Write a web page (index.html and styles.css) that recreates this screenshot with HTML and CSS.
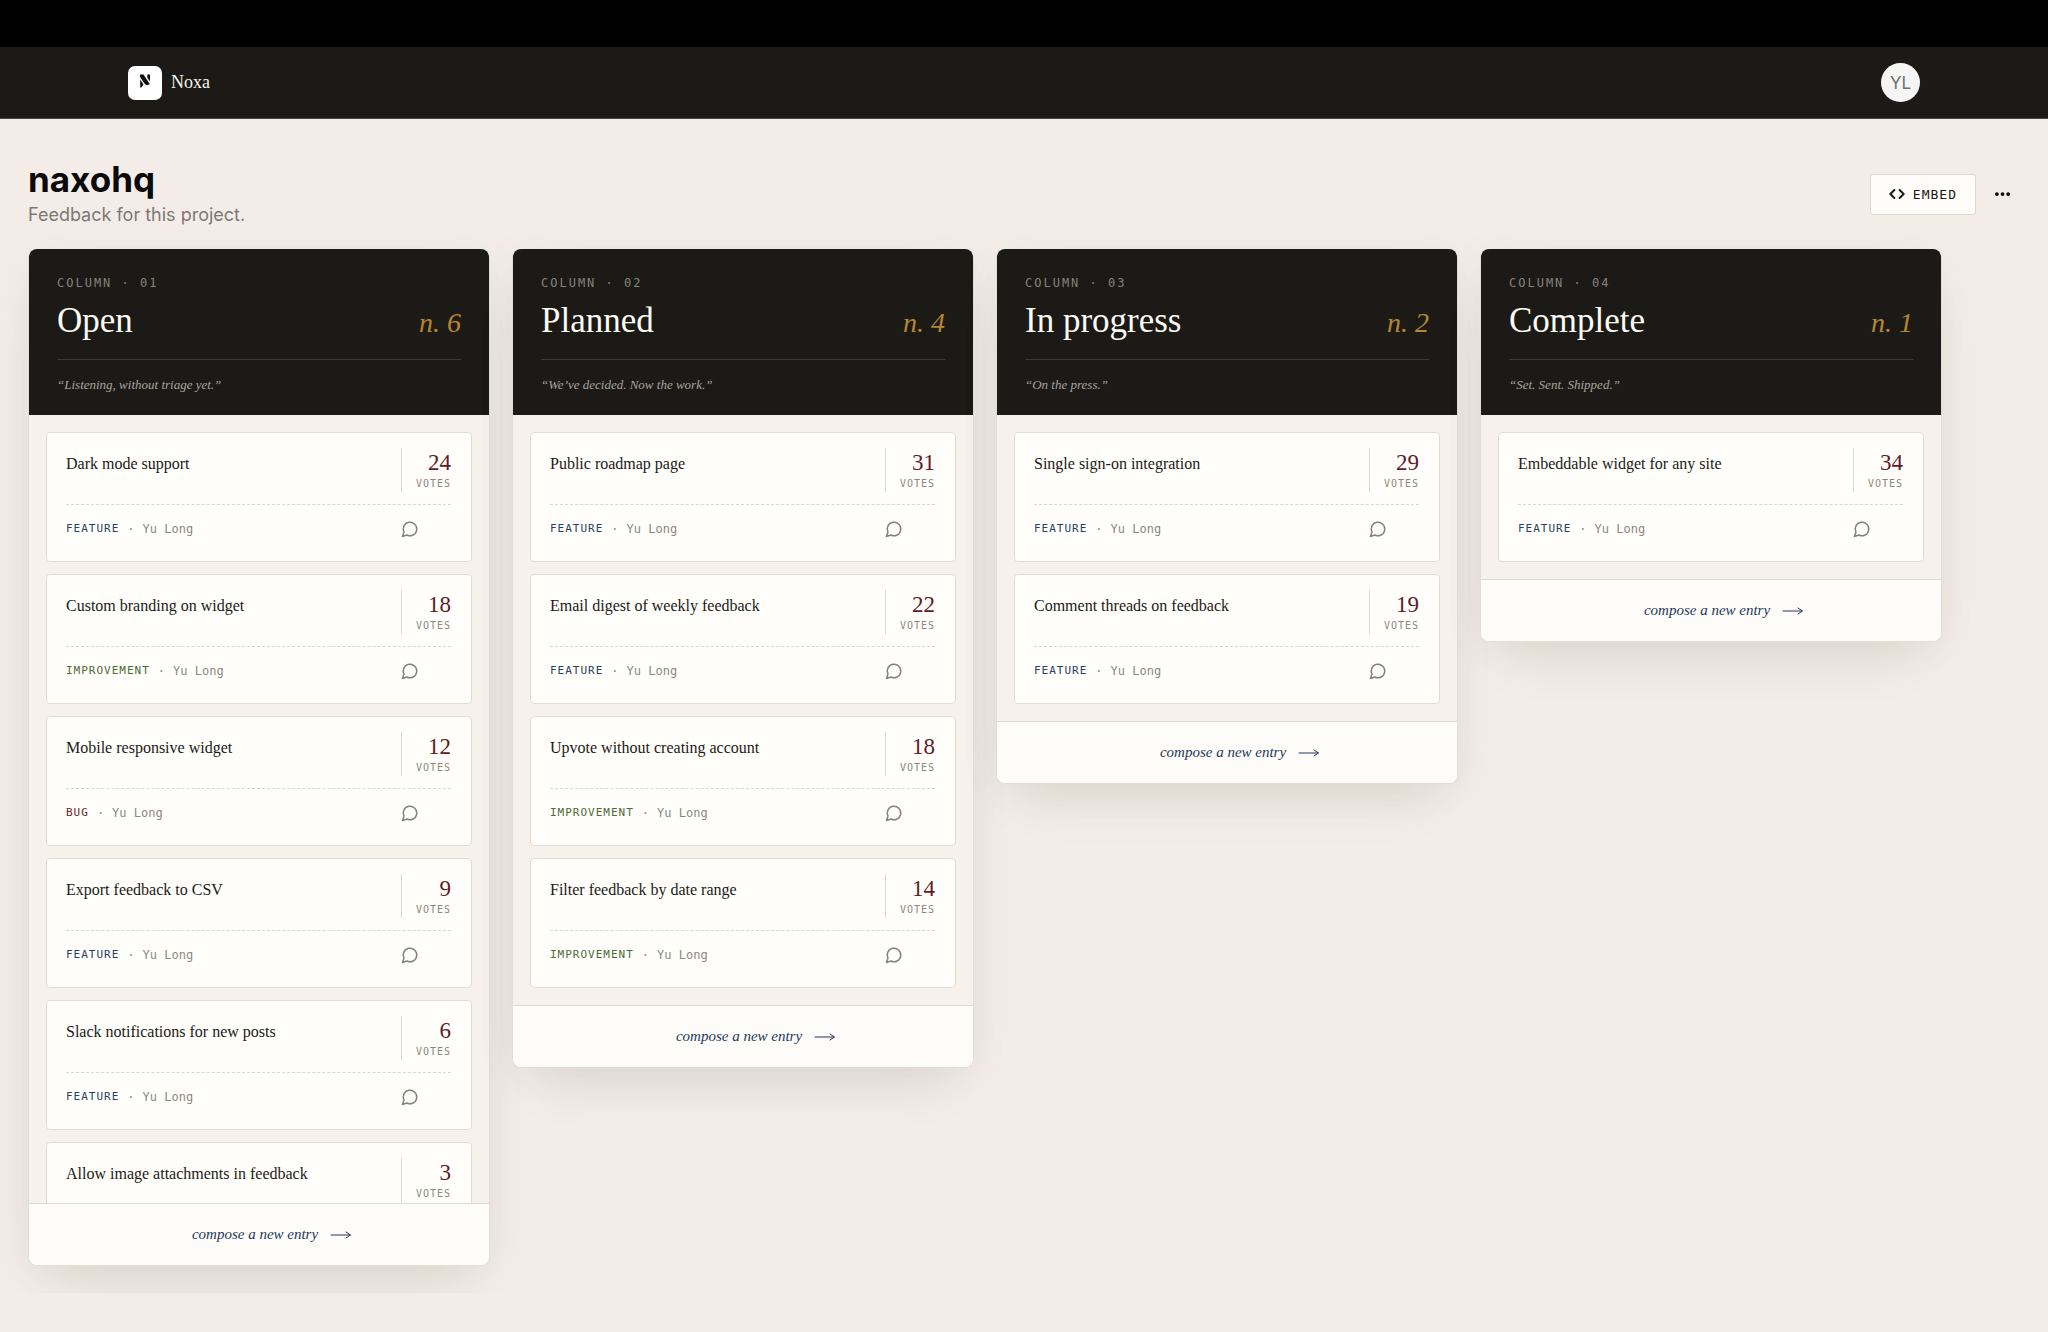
FILE: index.html
```html
<!DOCTYPE html>
<html lang="en">
<head>
  <meta charset="UTF-8">
  <meta name="viewport" content="width=device-width, initial-scale=1">
  <title>naxohq - Noxa</title>
  <link rel="stylesheet" href="styles.css">
</head>
<body>

  <!-- Shared icons -->
  <svg class="sprite" aria-hidden="true">
    <symbol id="comment" viewBox="0 0 24 24">
      <path d="M7.9 20A9 9 0 1 0 4 16.1L2 22Z"/>
    </symbol>
    <symbol id="arrow" viewBox="0 0 22 10">
      <path d="M1 5h19M16 2l4.500 3-4.500 3"/>
    </symbol>
  </svg>

  <div class="top-strip"></div>

  <!-- Navigation -->
  <nav class="navbar">
    <a class="brand" href="#">
      <span class="brand-mark">
        <svg viewBox="0 0 34 34" aria-hidden="true">
          <path d="M12 8.500h3.500l6.300 9.500c-1.800 1.700-4.300 1.200-5.500-.8L12 11z"/>
          <path d="M12.200 13.500l3.200 4.700c-.4 1.600-1.400 2.800-3.200 3.600z"/>
          <path d="M19.300 8.500h2.700v7l-2.700-3.800z"/>
        </svg>
      </span>
      Noxa
    </a>
    <button class="avatar" type="button" aria-label="Account">YL</button>
  </nav>

  <main>

    <!-- Project header -->
    <header class="project-header">
      <div>
        <h1>naxohq</h1>
        <p>Feedback for this project.</p>
      </div>
      <div class="actions">
        <button class="embed-btn" type="button">
          <svg viewBox="0 0 24 24" aria-hidden="true"><path d="M16 18l6-6-6-6M8 6l-6 6 6 6"/></svg>
          EMBED
        </button>
        <button class="more-btn" type="button" aria-label="More options">
          <svg viewBox="0 0 16 4" aria-hidden="true"><circle cx="2" cy="2" r="2"/><circle cx="8" cy="2" r="2"/><circle cx="14" cy="2" r="2"/></svg>
        </button>
      </div>
    </header>

    <!-- Board -->
    <div class="board">

      <section class="column">
        <header class="column-header">
          <p class="column-label">COLUMN · 01</p>
          <div class="column-title">
            <h2>Open</h2>
            <span class="column-count">n. 6</span>
          </div>
          <p class="column-quote">“Listening, without triage yet.”</p>
        </header>
        <div class="cards">
          <article class="card">
            <div class="card-top">
              <h3>Dark mode support</h3>
              <div class="votes"><strong>24</strong><span>VOTES</span></div>
            </div>
            <div class="card-meta">
              <span class="tag feature">FEATURE</span><span>·</span><span>Yu Long</span>
              <a class="comments" href="#" aria-label="Comments"><svg><use href="#comment"/></svg></a>
            </div>
          </article>
          <article class="card">
            <div class="card-top">
              <h3>Custom branding on widget</h3>
              <div class="votes"><strong>18</strong><span>VOTES</span></div>
            </div>
            <div class="card-meta">
              <span class="tag improvement">IMPROVEMENT</span><span>·</span><span>Yu Long</span>
              <a class="comments" href="#" aria-label="Comments"><svg><use href="#comment"/></svg></a>
            </div>
          </article>
          <article class="card">
            <div class="card-top">
              <h3>Mobile responsive widget</h3>
              <div class="votes"><strong>12</strong><span>VOTES</span></div>
            </div>
            <div class="card-meta">
              <span class="tag bug">BUG</span><span>·</span><span>Yu Long</span>
              <a class="comments" href="#" aria-label="Comments"><svg><use href="#comment"/></svg></a>
            </div>
          </article>
          <article class="card">
            <div class="card-top">
              <h3>Export feedback to CSV</h3>
              <div class="votes"><strong>9</strong><span>VOTES</span></div>
            </div>
            <div class="card-meta">
              <span class="tag feature">FEATURE</span><span>·</span><span>Yu Long</span>
              <a class="comments" href="#" aria-label="Comments"><svg><use href="#comment"/></svg></a>
            </div>
          </article>
          <article class="card">
            <div class="card-top">
              <h3>Slack notifications for new posts</h3>
              <div class="votes"><strong>6</strong><span>VOTES</span></div>
            </div>
            <div class="card-meta">
              <span class="tag feature">FEATURE</span><span>·</span><span>Yu Long</span>
              <a class="comments" href="#" aria-label="Comments"><svg><use href="#comment"/></svg></a>
            </div>
          </article>
          <article class="card">
            <div class="card-top">
              <h3>Allow image attachments in feedback</h3>
              <div class="votes"><strong>3</strong><span>VOTES</span></div>
            </div>
          </article>
        </div>
        <button class="compose" type="button">compose a new entry <svg><use href="#arrow"/></svg></button>
      </section>

      <section class="column">
        <header class="column-header">
          <p class="column-label">COLUMN · 02</p>
          <div class="column-title">
            <h2>Planned</h2>
            <span class="column-count">n. 4</span>
          </div>
          <p class="column-quote">“We’ve decided. Now the work.”</p>
        </header>
        <div class="cards">
          <article class="card">
            <div class="card-top">
              <h3>Public roadmap page</h3>
              <div class="votes"><strong>31</strong><span>VOTES</span></div>
            </div>
            <div class="card-meta">
              <span class="tag feature">FEATURE</span><span>·</span><span>Yu Long</span>
              <a class="comments" href="#" aria-label="Comments"><svg><use href="#comment"/></svg></a>
            </div>
          </article>
          <article class="card">
            <div class="card-top">
              <h3>Email digest of weekly feedback</h3>
              <div class="votes"><strong>22</strong><span>VOTES</span></div>
            </div>
            <div class="card-meta">
              <span class="tag feature">FEATURE</span><span>·</span><span>Yu Long</span>
              <a class="comments" href="#" aria-label="Comments"><svg><use href="#comment"/></svg></a>
            </div>
          </article>
          <article class="card">
            <div class="card-top">
              <h3>Upvote without creating account</h3>
              <div class="votes"><strong>18</strong><span>VOTES</span></div>
            </div>
            <div class="card-meta">
              <span class="tag improvement">IMPROVEMENT</span><span>·</span><span>Yu Long</span>
              <a class="comments" href="#" aria-label="Comments"><svg><use href="#comment"/></svg></a>
            </div>
          </article>
          <article class="card">
            <div class="card-top">
              <h3>Filter feedback by date range</h3>
              <div class="votes"><strong>14</strong><span>VOTES</span></div>
            </div>
            <div class="card-meta">
              <span class="tag improvement">IMPROVEMENT</span><span>·</span><span>Yu Long</span>
              <a class="comments" href="#" aria-label="Comments"><svg><use href="#comment"/></svg></a>
            </div>
          </article>
        </div>
        <button class="compose" type="button">compose a new entry <svg><use href="#arrow"/></svg></button>
      </section>

      <section class="column">
        <header class="column-header">
          <p class="column-label">COLUMN · 03</p>
          <div class="column-title">
            <h2>In progress</h2>
            <span class="column-count">n. 2</span>
          </div>
          <p class="column-quote">“On the press.”</p>
        </header>
        <div class="cards">
          <article class="card">
            <div class="card-top">
              <h3>Single sign-on integration</h3>
              <div class="votes"><strong>29</strong><span>VOTES</span></div>
            </div>
            <div class="card-meta">
              <span class="tag feature">FEATURE</span><span>·</span><span>Yu Long</span>
              <a class="comments" href="#" aria-label="Comments"><svg><use href="#comment"/></svg></a>
            </div>
          </article>
          <article class="card">
            <div class="card-top">
              <h3>Comment threads on feedback</h3>
              <div class="votes"><strong>19</strong><span>VOTES</span></div>
            </div>
            <div class="card-meta">
              <span class="tag feature">FEATURE</span><span>·</span><span>Yu Long</span>
              <a class="comments" href="#" aria-label="Comments"><svg><use href="#comment"/></svg></a>
            </div>
          </article>
        </div>
        <button class="compose" type="button">compose a new entry <svg><use href="#arrow"/></svg></button>
      </section>

      <section class="column">
        <header class="column-header">
          <p class="column-label">COLUMN · 04</p>
          <div class="column-title">
            <h2>Complete</h2>
            <span class="column-count">n. 1</span>
          </div>
          <p class="column-quote">“Set. Sent. Shipped.”</p>
        </header>
        <div class="cards">
          <article class="card">
            <div class="card-top">
              <h3>Embeddable widget for any site</h3>
              <div class="votes"><strong>34</strong><span>VOTES</span></div>
            </div>
            <div class="card-meta">
              <span class="tag feature">FEATURE</span><span>·</span><span>Yu Long</span>
              <a class="comments" href="#" aria-label="Comments"><svg><use href="#comment"/></svg></a>
            </div>
          </article>
        </div>
        <button class="compose" type="button">compose a new entry <svg><use href="#arrow"/></svg></button>
      </section>

    </div>
  </main>

</body>
</html>
```
FILE: styles.css
```css
* {
  box-sizing: border-box;
}
body {
  margin: 0;
  height: 100vh;
  display: flex;
  flex-direction: column;
  background-color: #f4ede7;
  color: #1b1a16;
  font-family: Inter, sans-serif;
}
h1, h2, h3, p {
  margin: 0;
}
button {
  cursor: pointer;
}
svg {
  display: block;
  fill: none;
  stroke: currentColor;
  stroke-linecap: round;
  stroke-linejoin: round;
}
.sprite {
  display: none;
}

/* Navigation */
.top-strip {
  flex: none;
  height: 47px;
  background-color: #000;
}
.navbar {
  flex: none;
  display: flex;
  align-items: center;
  justify-content: space-between;
  height: 72px;
  padding: 0 128px;
  background-color: #1b1a16;
  border-bottom: 1px solid #4a4843;
}
.brand {
  display: flex;
  align-items: center;
  gap: 9px;
  color: #f7f3ec;
  font-family: "Liberation Serif", serif;
  font-size: 18px;
  text-decoration: none;
}
.brand-mark {
  width: 34px;
  height: 34px;
  border-radius: 7px;
  background-color: #fff;
}
.brand-mark svg {
  fill: #111;
  stroke: none;
}
.avatar {
  width: 39px;
  height: 39px;
  padding: 0;
  border: none;
  border-radius: 50%;
  background-color: #f5f5f5;
  color: #6f6f6f;
  font-family: Inter, sans-serif;
  font-size: 17px;
}

/* Project header */
main {
  flex: 1;
  min-height: 0;
  display: flex;
  flex-direction: column;
  padding: 39px 0;
}
.project-header {
  display: flex;
  align-items: center;
  justify-content: space-between;
  padding: 0 28px;
}
.project-header h1 {
  color: #0a0a0a;
  font-size: 35px;
  line-height: 42px;
}
.project-header p {
  color: #7c7974;
  font-size: 18px;
  line-height: 30px;
}
.actions {
  display: flex;
  align-items: center;
  gap: 8px;
}
.embed-btn {
  display: flex;
  align-items: center;
  gap: 8px;
  height: 41px;
  padding: 0 18px;
  border: 1px solid #e0d8cb;
  border-radius: 3px;
  background-color: #fdfcf8;
  color: #1b1a16;
  font-family: "DejaVu Sans Mono", monospace;
  font-size: 13px;
  letter-spacing: 1px;
}
.embed-btn svg {
  width: 16px;
  height: 16px;
  stroke-width: 3;
}
.more-btn {
  display: flex;
  align-items: center;
  justify-content: center;
  width: 36px;
  height: 36px;
  padding: 0;
  border: none;
  background: none;
  color: #0a0a0a;
}
.more-btn svg {
  width: 15px;
  height: 4px;
  fill: currentColor;
  stroke: none;
}

/* Board */
.board {
  flex: 1;
  min-height: 0;
  display: flex;
  align-items: flex-start;
  gap: 22px;
  padding: 19px 28px 27px;
  overflow: hidden;
}
.column {
  flex: 0 0 462px;
  display: flex;
  flex-direction: column;
  max-height: 100%;
  border: 1px solid #e5ddd3;
  border-top: none;
  border-radius: 9px;
  background-color: #f7f1ec;
  box-shadow: 0 28px 56px -24px rgba(50, 45, 35, 0.14), 0 4px 48px rgba(50, 45, 35, 0.04);
}
.column-header {
  flex: none;
  padding: 24px 28px 18px;
  border-radius: 8px 8px 0 0;
  background-color: #1b1a16;
}
.column-label {
  color: #86827a;
  font-family: "DejaVu Sans Mono", monospace;
  font-size: 12px;
  line-height: 20px;
  letter-spacing: 2px;
}
.column-title {
  display: flex;
  align-items: baseline;
  justify-content: space-between;
  padding-bottom: 8px;
  border-bottom: 1px solid #3b3a35;
  font-family: "Liberation Serif", serif;
  line-height: 56px;
}
.column-title h2 {
  color: #fdfaf3;
  font-size: 35px;
  font-weight: normal;
}
.column-count {
  color: #b8862f;
  font-size: 28px;
  font-style: italic;
}
.column-quote {
  padding-top: 13px;
  color: #a8a49c;
  font-family: "Liberation Serif", serif;
  font-size: 13px;
  font-style: italic;
  line-height: 24px;
}
.cards {
  display: flex;
  flex-direction: column;
  gap: 12px;
  min-height: 0;
  padding: 17px;
  overflow-y: auto;
  scrollbar-width: none;
}

/* Cards */
.card {
  flex: none;
  height: 130px;
  padding: 15px 20px 15px 19px;
  border: 1px solid #e4dccf;
  border-radius: 4px;
  background-color: #fffefa;
}
.card-top {
  display: flex;
  justify-content: space-between;
  padding-bottom: 12px;
  border-bottom: 1px dashed #dcd6ca;
  font-family: "Liberation Serif", serif;
}
.card-top h3 {
  font-size: 16px;
  font-weight: normal;
  line-height: 32px;
}
.votes {
  display: flex;
  flex-direction: column;
  align-items: flex-end;
  height: 44px;
  padding-left: 14px;
  border-left: 1px solid #ddd7cd;
}
.votes strong {
  color: #5f1a2b;
  font-size: 23px;
  font-weight: normal;
  line-height: 29px;
}
.votes span {
  color: #8b8880;
  font-family: "DejaVu Sans Mono", monospace;
  font-size: 10px;
  line-height: 14px;
  letter-spacing: 1px;
}
.card-meta {
  display: flex;
  align-items: center;
  gap: 8px;
  padding-top: 14px;
  color: #8b8880;
  font-family: "DejaVu Sans Mono", monospace;
  font-size: 12px;
  line-height: 20px;
}
.tag {
  font-size: 11px;
  letter-spacing: 1px;
}
.feature {
  color: #2b4063;
}
.improvement {
  color: #4d6b35;
}
.bug {
  color: #6b2230;
}
.comments {
  margin-left: auto;
  padding-right: 32px;
  color: #85827b;
}
.comments svg {
  width: 18px;
  height: 18px;
  stroke-width: 2;
}

/* Column footer */
.compose {
  flex: none;
  display: flex;
  align-items: center;
  justify-content: center;
  gap: 12px;
  height: 62px;
  padding: 0 0 0 26px;
  border: none;
  border-top: 1px solid #e2dacf;
  border-radius: 0 0 8px 8px;
  background-color: #fdfcf8;
  color: #24395c;
  font-family: "Liberation Serif", serif;
  font-size: 15px;
  font-style: italic;
}
.compose svg {
  width: 22px;
  height: 10px;
  stroke-width: 1;
}
```
